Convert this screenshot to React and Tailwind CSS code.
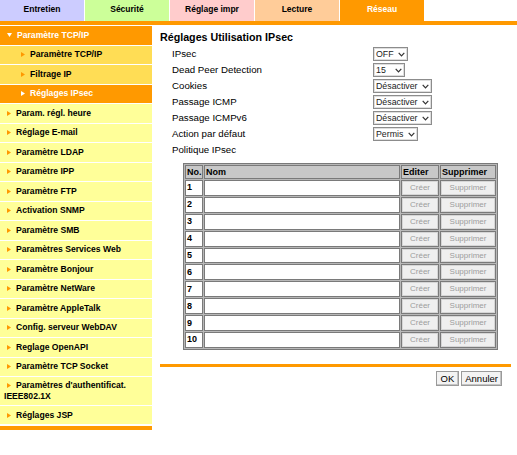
import React from "react";

const tabs = [
  { label: "Entretien", cls: "bg-[#ccccff] text-black" },
  { label: "Sécurité", cls: "bg-[#ccff99] text-black" },
  { label: "Réglage impr", cls: "bg-[#ffcccc] text-black" },
  { label: "Lecture", cls: "bg-[#ffcc99] text-black" },
  { label: "Réseau", cls: "bg-[#ff9900] text-white" },
];

const mainItems = [
  "Param. régl. heure",
  "Réglage E-mail",
  "Paramètre LDAP",
  "Paramètre IPP",
  "Paramètre FTP",
  "Activation SNMP",
  "Paramètre SMB",
  "Paramètres Services Web",
  "Paramètre Bonjour",
  "Paramètre NetWare",
  "Paramètre AppleTalk",
  "Config. serveur WebDAV",
  "Reglage OpenAPI",
  "Paramètre TCP Socket",
];

function Tri({ color }) {
  return (
    <svg width="4" height="5" viewBox="0 0 4 5" className="inline-block shrink-0">
      <polygon points="0,0 4,2.5 0,5" fill={color} />
    </svg>
  );
}

function Chevron() {
  return (
    <svg width="7" height="5" viewBox="0 0 7 5" className="shrink-0">
      <polyline points="0.7,0.8 3.5,3.8 6.3,0.8" fill="none" stroke="#333" strokeWidth="1.2" />
    </svg>
  );
}

function Sel({ text, wcls }) {
  return (
    <div
      className={`${wcls} h-[13.5px] flex items-center justify-between pl-[2px] pr-[2px] border border-[#8c8c8c] shadow-[inset_0_0_0_1px_#dedede] bg-white text-[8.8px] leading-none text-[#222]`}
    >
      <span>{text}</span>
      <Chevron />
    </div>
  );
}

const rows = [
  { label: "IPsec", sel: <Sel text="OFF" wcls="w-[35px]" /> },
  { label: "Dead Peer Detection", sel: <Sel text="15" wcls="w-[32px]" /> },
  { label: "Cookies", sel: <Sel text="Désactiver" wcls="w-[59px]" /> },
  { label: "Passage ICMP", sel: <Sel text="Désactiver" wcls="w-[59px]" /> },
  { label: "Passage ICMPv6", sel: <Sel text="Désactiver" wcls="w-[59px]" /> },
  { label: "Action par défaut", sel: <Sel text="Permis" wcls="w-[45px]" /> },
];

function DisBtn({ children }) {
  return (
    <div className="h-full w-full flex items-center justify-center bg-[#efefef] border border-[#d6d6d6] text-[#9c9c9c] text-[8px] leading-none">
      {children}
    </div>
  );
}

export default function App() {
  return (
    <div className="w-[517px] h-[455px] bg-white overflow-hidden font-['Liberation_Sans',Arial,sans-serif] text-black">
      {/* Tabs */}
      <div className="flex gap-px h-[21px]">
        {tabs.map((t) => (
          <div
            key={t.label}
            className={`w-[84px] h-full flex items-center justify-center pb-[2px] text-[8.5px] font-bold ${t.cls}`}
          >
            {t.label}
          </div>
        ))}
      </div>
      <div className="h-[4px] bg-[#ff9900]" />

      <div className="flex">
        {/* Sidebar */}
        <aside className="w-[152px] shrink-0 pt-px text-[8.6px] font-bold">
          <div className="h-[18.5px] mb-px bg-[#ff9900] text-white flex items-center pl-[7px]">
            <svg width="5" height="4" viewBox="0 0 5 4" className="shrink-0 mr-[5px]">
              <polygon points="0,0 5,0 2.5,4" fill="#fff" />
            </svg>
            Paramètre TCP/IP
          </div>
          <div className="h-[18.5px] mb-px bg-[#ffdd55] flex items-center pl-[21px] gap-[5px]">
            <Tri color="#ff9900" />
            Paramètre TCP/IP
          </div>
          <div className="h-[18.5px] mb-px bg-[#ffdd55] flex items-center pl-[21px] gap-[5px]">
            <Tri color="#ff9900" />
            Filtrage IP
          </div>
          <div className="h-[18.5px] mb-px bg-[#ff9900] text-white flex items-center pl-[21px] gap-[5px]">
            <Tri color="#ffffff" />
            Réglages IPsec
          </div>
          {mainItems.map((m) => (
            <div key={m} className="h-[18.5px] mb-px bg-[#ffff99] flex items-center pl-[7px] gap-[5px]">
              <Tri color="#ff9900" />
              {m}
            </div>
          ))}
          <div className="h-[27.75px] mb-px bg-[#ffff99] pl-[4px] pt-[3px] leading-[10.5px]">
            <span className="inline-block ml-[3px] mr-[5px] align-[0px]">
              <Tri color="#ff9900" />
            </span>
            Paramètres d'authentificat. IEEE802.1X
          </div>
          <div className="h-[18.5px] mb-px bg-[#ffff99] flex items-center pl-[7px] gap-[5px]">
            <Tri color="#ff9900" />
            Réglages JSP
          </div>
          <div className="mt-[2px] h-[3.5px] bg-[#ff9900]" />
        </aside>

        {/* Content */}
        <main className="flex-1">
          <div className="pl-[8px] pt-[5px] h-[21px] text-[10.7px] font-bold leading-[14px]">
            Réglages Utilisation IPsec
          </div>
          <div className="pl-[20px]">
            {rows.map((r) => (
              <div key={r.label} className="h-[16px] flex items-center">
                <div className="w-[201px] text-[9.7px]">{r.label}</div>
                {r.sel}
              </div>
            ))}
            <div className="h-[16px] flex items-center text-[9.7px]">Politique IPsec</div>
          </div>

          <table className="ml-[31px] mt-[5px] w-[315px] table-fixed border-separate border-spacing-[1px] bg-[#b8b8b8] border border-[#7a7a7a] text-[9px]">
            <colgroup>
              <col className="w-[18px]" />
              <col />
              <col className="w-[38px]" />
              <col className="w-[56px]" />
            </colgroup>
            <thead>
              <tr>
                {["No.", "Nom", "Editer", "Supprimer"].map((h) => (
                  <th
                    key={h}
                    className="h-[14px] p-0 pl-[1px] text-left font-bold bg-[#c8c8c8] border border-[#7a7a7a] leading-none"
                  >
                    {h}
                  </th>
                ))}
              </tr>
            </thead>
            <tbody>
              {[1, 2, 3, 4, 5, 6, 7, 8, 9, 10].map((n) => (
                <tr key={n}>
                  <td className="h-[15.9px] p-0 pl-[1px] font-bold bg-white border border-[#7a7a7a] leading-none">
                    {n}
                  </td>
                  <td className="h-[15.9px] p-0 bg-white border border-[#7a7a7a]" />
                  <td className="h-[15.9px] p-0 border border-[#7a7a7a]">
                    <DisBtn>Créer</DisBtn>
                  </td>
                  <td className="h-[15.9px] p-0 border border-[#7a7a7a]">
                    <DisBtn>Supprimer</DisBtn>
                  </td>
                </tr>
              ))}
            </tbody>
          </table>

          <div className="ml-[8px] w-[351px] h-[3.3px] mt-[14px] bg-[#ff9900]" />
          <div className="flex justify-end gap-[2px] pr-[15px] mt-[4px]">
            <div className="h-[15px] px-[4px] flex items-center bg-[#f3f3f3] border border-[#9a9a9a] shadow-[inset_-1px_-1px_0_#c4c4c4] text-[9.5px] leading-none">
              OK
            </div>
            <div className="h-[15px] px-[3px] flex items-center bg-[#f3f3f3] border border-[#9a9a9a] shadow-[inset_-1px_-1px_0_#c4c4c4] text-[9.5px] leading-none">
              Annuler
            </div>
          </div>
        </main>
      </div>
    </div>
  );
}
